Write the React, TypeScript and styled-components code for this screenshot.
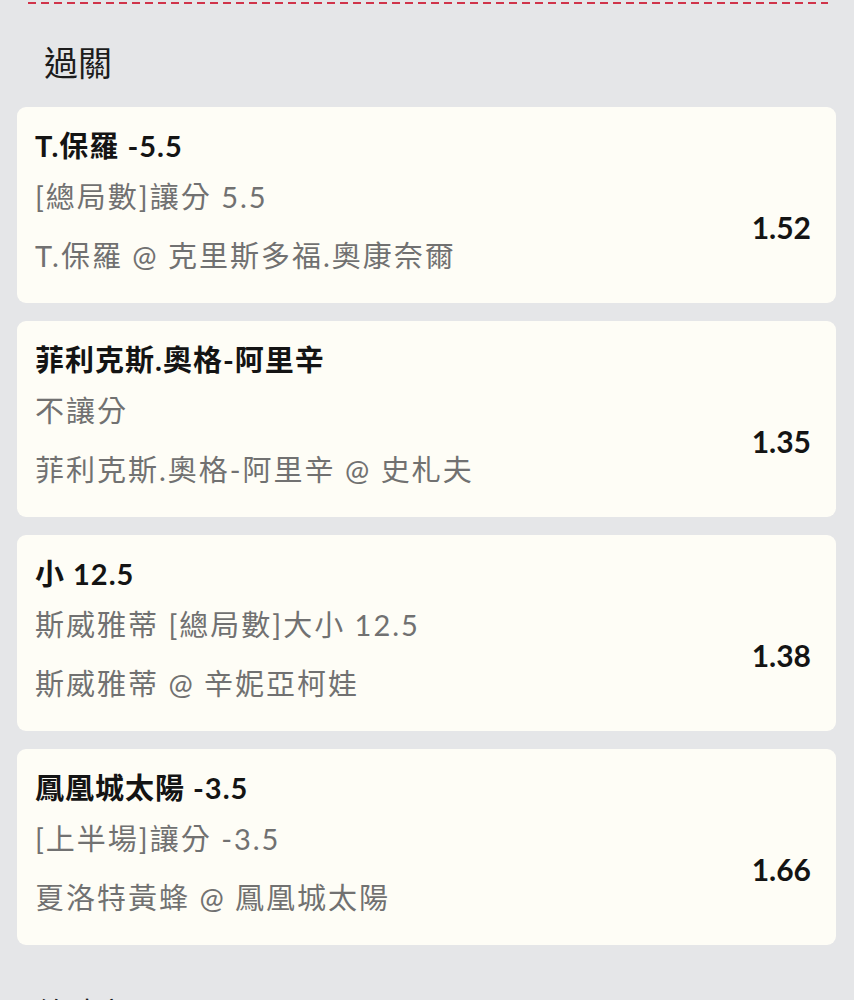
import React from "react";
import styled, { createGlobalStyle } from "styled-components";

const GlobalStyle = createGlobalStyle`
  html, body {
    margin: 0;
    padding: 0;
    background: #e5e6e8;
  }
  body {
    font-family: Lato, "Noto Sans CJK TC", sans-serif;
    -webkit-font-smoothing: antialiased;
  }
`;

const Page = styled.div`
  width: 854px;
  min-height: 1000px;
  box-sizing: border-box;
  padding: 2px 18px 0 17px;
  display: flex;
  flex-direction: column;
  overflow: hidden;
`;

const Dashed = styled.div`
  height: 2px;
  margin: 0 8px 0 11px;
  background: repeating-linear-gradient(
    to right,
    #d0344a 0 8px,
    transparent 8px 13px
  );
`;

const SectionTitle = styled.h2`
  margin: 36px 0 0 27px;
  font-family: "Noto Sans CJK TC", sans-serif;
  font-size: 34px;
  line-height: 44px;
  font-weight: 400;
  color: #1c1c1c;
`;

const List = styled.div`
  display: flex;
  flex-direction: column;
  gap: 18px;
  margin-top: 23px;
`;

const Card = styled.div`
  background: #fefdf6;
  border-radius: 9px;
  padding: 21px 25px 29px 18px;
  display: flex;
  flex-direction: column;
`;

const Title = styled.div`
  font-size: 29px;
  letter-spacing: 1px;
  line-height: 36px;
  font-weight: 700;
  color: #141414;
`;

const Body = styled.div`
  display: flex;
  align-items: center;
  justify-content: space-between;
  margin-top: 15px;
`;

const Lines = styled.div`
  display: flex;
  flex-direction: column;
  gap: 23px;
`;

const Line = styled.div`
  font-size: 29px;
  letter-spacing: 2px;
  line-height: 36px;
  font-weight: 400;
  color: #717171;
`;

const Odds = styled.div`
  font-size: 30px;
  font-weight: 700;
  color: #141414;
  line-height: 36px;
`;

const Footer = styled.div`
  margin: 46px 0 0 20px;
  font-family: "Noto Sans CJK TC", sans-serif;
  font-size: 30px;
  line-height: 40px;
  color: #1c1c1c;
`;

type Bet = { title: string; market: string; match: string; odds: string };

const bets: Bet[] = [
  {
    title: "T.保羅 -5.5",
    market: "[總局數]讓分 5.5",
    match: "T.保羅 @ 克里斯多福.奧康奈爾",
    odds: "1.52",
  },
  {
    title: "菲利克斯.奧格-阿里辛",
    market: "不讓分",
    match: "菲利克斯.奧格-阿里辛 @ 史札夫",
    odds: "1.35",
  },
  {
    title: "小 12.5",
    market: "斯威雅蒂 [總局數]大小 12.5",
    match: "斯威雅蒂 @ 辛妮亞柯娃",
    odds: "1.38",
  },
  {
    title: "鳳凰城太陽 -3.5",
    market: "[上半場]讓分 -3.5",
    match: "夏洛特黃蜂 @ 鳳凰城太陽",
    odds: "1.66",
  },
];

export default function App() {
  return (
    <>
      <GlobalStyle />
      <Page>
        <Dashed />
        <SectionTitle>過關</SectionTitle>
        <List>
          {bets.map((b) => (
            <Card key={b.title}>
              <Title>{b.title}</Title>
              <Body>
                <Lines>
                  <Line>{b.market}</Line>
                  <Line>{b.match}</Line>
                </Lines>
                <Odds>{b.odds}</Odds>
              </Body>
            </Card>
          ))}
        </List>
        <Footer>總賠率</Footer>
      </Page>
    </>
  );
}
